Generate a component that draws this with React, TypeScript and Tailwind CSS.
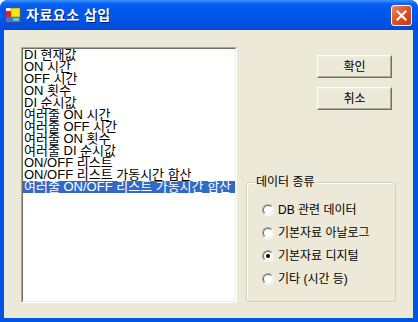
const items = [
  'DI 현재값',
  'ON 시간',
  'OFF 시간',
  'ON 횟수',
  'DI 순시값',
  '여러줄 ON 시간',
  '여러줄 OFF 시간',
  '여러줄 ON 횟수',
  '여러줄 DI 순시값',
  'ON/OFF 리스트',
  'ON/OFF 리스트 가동시간 합산',
  '여러줄 ON/OFF 리스트 가동시간 합산',
];

const options = [
  { label: 'DB 관련 데이터', checked: false },
  { label: '기본자료 아날로그', checked: false },
  { label: '기본자료 디지털', checked: true },
  { label: '기타 (시간 등)', checked: false },
];

const font = "font-['Liberation_Sans','Noto_Sans_CJK_KR',sans-serif]";

function AppIcon() {
  return (
    <svg width="16" height="16" viewBox="0 0 16 16">
      <rect x="0.5" y="0.5" width="15" height="15" fill="#fff" stroke="#3a4a8c" />
      <rect x="1" y="4" width="6" height="6" fill="#e0202a" />
      <rect x="6" y="1" width="9" height="9" fill="#f5e81a" stroke="#8a7a10" strokeWidth="0.6" />
      <rect x="1" y="10" width="14" height="5" fill="#2a7ad8" />
      <rect x="8" y="11" width="6" height="3" fill="#58c8f0" />
    </svg>
  );
}

function Button({ label }: { label: string }) {
  return (
    <div className="w-[75px] h-[23px] border border-t-white border-l-white border-b-[#716F64] border-r-[#716F64]">
      <div className="w-full h-full flex items-center justify-center border border-t-[#F1EFE2] border-l-[#F1EFE2] border-b-[#ACA899] border-r-[#ACA899] text-[12px] text-black">
        {label}
      </div>
    </div>
  );
}

function Radio({ checked }: { checked: boolean }) {
  return (
    <div className="w-[12px] h-[12px] rounded-full border border-t-[#ACA899] border-l-[#ACA899] border-b-white border-r-white">
      <div className="w-full h-full rounded-full bg-white border border-t-[#716F64] border-l-[#716F64] border-b-[#F1EFE2] border-r-[#F1EFE2] flex items-center justify-center">
        {checked && <div className="w-[4px] h-[4px] rounded-full bg-black" />}
      </div>
    </div>
  );
}

export default function App() {
  return (
    <div className={`w-[418px] h-[322px] flex flex-col bg-[#0054E3] rounded-t-[8px] overflow-hidden ${font}`}>
      {/* Title bar */}
      <div className="h-[30px] shrink-0 flex items-center pl-[5px] pr-[6px] bg-[linear-gradient(to_bottom,#3d95ff_0%,#0a64f0_12%,#0058ee_30%,#0055e8_70%,#0048d8_100%)]">
        <AppIcon />
        <span className="ml-[5px] text-[14px] font-bold text-white tracking-[0.5px] [text-shadow:1px_1px_0_#0a1e7a]">자료요소 삽입</span>
        <div className="ml-auto w-[21px] h-[21px] rounded-[3px] border border-white bg-[linear-gradient(135deg,#f08a66,#e0532a_45%,#c63a10)] flex items-center justify-center">
          <svg width="11" height="11" viewBox="0 0 11 11">
            <path d="M1.5 1.5 L9.5 9.5 M9.5 1.5 L1.5 9.5" stroke="#fff" strokeWidth="2.2" strokeLinecap="square" />
          </svg>
        </div>
      </div>

      {/* Body */}
      <div className="flex-1 ml-[4px] mr-[5px] mb-[4px] bg-[#ECE9D8] flex pt-[17px] pl-[17px]">
        {/* Listbox */}
        <div className="w-[216px] h-[256px] border border-t-[#ACA899] border-l-[#ACA899] border-b-white border-r-white">
          <div className="w-full h-full bg-white border border-t-[#716F64] border-l-[#716F64] border-b-[#F1EFE2] border-r-[#F1EFE2] overflow-hidden">
            {items.map((t, i) => (
              <div
                key={t}
                className={`h-[12px] leading-[12px] text-[13px] pl-[1px] whitespace-nowrap ${
                  i === items.length - 1 ? 'bg-[#316AC5] text-white' : 'text-black'
                }`}
              >
                {t}
              </div>
            ))}
          </div>
        </div>

        {/* Right column */}
        <div className="ml-[9px] w-[150px] h-[256px] flex flex-col">
          <div className="flex flex-col items-end gap-[9px] mt-[8px] mr-[4px]">
            <Button label="확인" />
            <Button label="취소" />
          </div>

          <div className="mt-auto mb-[1px] relative h-[120px] border border-[#D0D0BF] rounded-[3px] shadow-[inset_1px_1px_0_#fff]">
            <span className="absolute left-[7px] top-[-9px] px-[2px] bg-[#ECE9D8] text-[12px] leading-[16px] text-black">데이터 종류</span>
            <div className="flex flex-col pt-[15px] pl-[15px]">
              {options.map(o => (
                <div key={o.label} className="h-[23px] flex items-center gap-[4px]">
                  <Radio checked={o.checked} />
                  <span className="text-[12px] text-black">{o.label}</span>
                </div>
              ))}
            </div>
          </div>
        </div>
      </div>
    </div>
  );
}
